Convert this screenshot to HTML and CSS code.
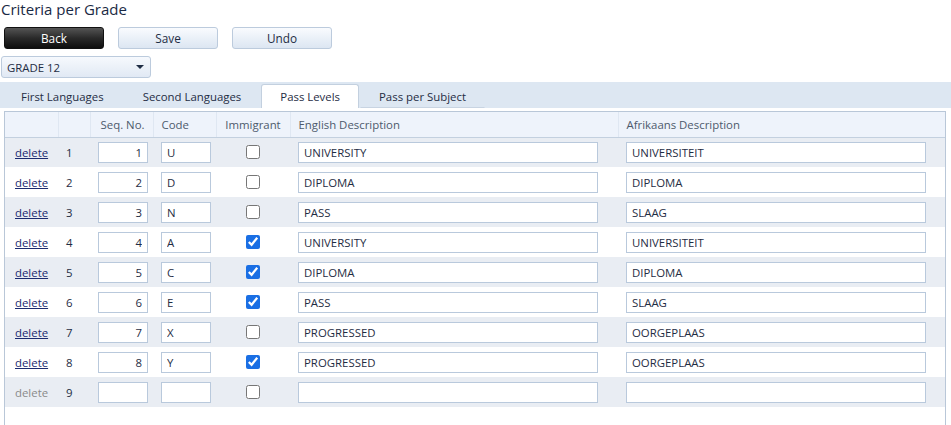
FILE: index.html
```html
<!DOCTYPE html>
<html lang="en">
  <head>
    <meta charset="UTF-8" />
    <meta name="viewport" content="width=device-width, initial-scale=1.0" />
    <title>Criteria per Grade</title>
    <link rel="stylesheet" href="styles.css">
  </head>

  <body>
    <div class="page">
      <h1>Criteria per Grade</h1>

      <div class="toolbar">
        <a href="#" class="btn btn-dark">Back</a>
        <a href="#" class="btn">Save</a>
        <a href="#" class="btn">Undo</a>
      </div>

      <div class="select">
        <span>GRADE 12</span>
        <span class="caret"></span>
      </div>

      <!-- tabs -->
      <div class="tabs">
        <div class="tab">First Languages</div>
        <div class="tab">Second Languages</div>
        <div class="tab active">Pass Levels</div>
        <div class="tab">Pass per Subject</div>
      </div>

      <div class="grid">
        <table>
          <colgroup>
            <col class="c-del" />
            <col class="c-num" />
            <col class="c-seq" />
            <col class="c-code" />
            <col class="c-imm" />
            <col class="c-eng" />
            <col class="c-afr" />
          </colgroup>
          <thead>
            <tr>
              <th></th>
              <th></th>
              <th class="right">Seq. No.</th>
              <th>Code</th>
              <th class="center">Immigrant</th>
              <th>English Description</th>
              <th>Afrikaans Description</th>
            </tr>
          </thead>
          <tbody>
            <tr>
              <td><a href="#" class="del">delete</a></td>
              <td>1</td>
              <td><input class="seq" type="text" value="1" /></td>
              <td><input class="code" type="text" value="U" /></td>
              <td class="center"><input type="checkbox" /></td>
              <td><input class="desc" type="text" value="UNIVERSITY" /></td>
              <td><input class="desc" type="text" value="UNIVERSITEIT" /></td>
            </tr>
            <tr>
              <td><a href="#" class="del">delete</a></td>
              <td>2</td>
              <td><input class="seq" type="text" value="2" /></td>
              <td><input class="code" type="text" value="D" /></td>
              <td class="center"><input type="checkbox" /></td>
              <td><input class="desc" type="text" value="DIPLOMA" /></td>
              <td><input class="desc" type="text" value="DIPLOMA" /></td>
            </tr>
            <tr>
              <td><a href="#" class="del">delete</a></td>
              <td>3</td>
              <td><input class="seq" type="text" value="3" /></td>
              <td><input class="code" type="text" value="N" /></td>
              <td class="center"><input type="checkbox" /></td>
              <td><input class="desc" type="text" value="PASS" /></td>
              <td><input class="desc" type="text" value="SLAAG" /></td>
            </tr>
            <tr>
              <td><a href="#" class="del">delete</a></td>
              <td>4</td>
              <td><input class="seq" type="text" value="4" /></td>
              <td><input class="code" type="text" value="A" /></td>
              <td class="center"><input type="checkbox" checked /></td>
              <td><input class="desc" type="text" value="UNIVERSITY" /></td>
              <td><input class="desc" type="text" value="UNIVERSITEIT" /></td>
            </tr>
            <tr>
              <td><a href="#" class="del">delete</a></td>
              <td>5</td>
              <td><input class="seq" type="text" value="5" /></td>
              <td><input class="code" type="text" value="C" /></td>
              <td class="center"><input type="checkbox" checked /></td>
              <td><input class="desc" type="text" value="DIPLOMA" /></td>
              <td><input class="desc" type="text" value="DIPLOMA" /></td>
            </tr>
            <tr>
              <td><a href="#" class="del">delete</a></td>
              <td>6</td>
              <td><input class="seq" type="text" value="6" /></td>
              <td><input class="code" type="text" value="E" /></td>
              <td class="center"><input type="checkbox" checked /></td>
              <td><input class="desc" type="text" value="PASS" /></td>
              <td><input class="desc" type="text" value="SLAAG" /></td>
            </tr>
            <tr>
              <td><a href="#" class="del">delete</a></td>
              <td>7</td>
              <td><input class="seq" type="text" value="7" /></td>
              <td><input class="code" type="text" value="X" /></td>
              <td class="center"><input type="checkbox" /></td>
              <td><input class="desc" type="text" value="PROGRESSED" /></td>
              <td><input class="desc" type="text" value="OORGEPLAAS" /></td>
            </tr>
            <tr>
              <td><a href="#" class="del">delete</a></td>
              <td>8</td>
              <td><input class="seq" type="text" value="8" /></td>
              <td><input class="code" type="text" value="Y" /></td>
              <td class="center"><input type="checkbox" checked /></td>
              <td><input class="desc" type="text" value="PROGRESSED" /></td>
              <td><input class="desc" type="text" value="OORGEPLAAS" /></td>
            </tr>
            <!-- new (empty) row -->
            <tr>
              <td><span class="del disabled">delete</span></td>
              <td>9</td>
              <td><input class="seq" type="text" value="" /></td>
              <td><input class="code" type="text" value="" /></td>
              <td class="center"><input type="checkbox" /></td>
              <td><input class="desc" type="text" value="" /></td>
              <td><input class="desc" type="text" value="" /></td>
            </tr>
          </tbody>
        </table>
      </div>
    </div>
  </body>
</html>
```

FILE: styles.css
```css
* {
  font-family: "Open Sans", "Noto Sans", sans-serif;
  margin: 0;
  padding: 0;
  box-sizing: border-box;
}

body {
  background-color: #ffffff;
  color: #1f2d44;
  font-size: 11.4px;
}

.page {
  display: flex;
  flex-direction: column;
}

h1 {
  font-size: 15px;
  font-weight: normal;
  line-height: 18px;
  color: #1a2a44;
  padding-left: 1px;
}

/* buttons */
.toolbar {
  display: flex;
  gap: 14px;
  padding: 9px 0 0 4px;
}

.btn {
  display: block;
  width: 100px;
  height: 22px;
  line-height: 20px;
  text-align: center;
  font-size: 11.8px;
  color: #1f2d44;
  text-decoration: none;
  border: 1px solid #bccbdd;
  border-radius: 3px;
  background: linear-gradient(#f9fbfe, #dce6f2);
}

.btn-dark {
  color: #ffffff;
  border-color: #111111;
  background: linear-gradient(#545454, #2a2a2a 50%, #0e0e0e);
}

/* grade dropdown */
.select {
  display: flex;
  align-items: center;
  justify-content: space-between;
  width: 150px;
  height: 22px;
  margin: 7px 0 0 1px;
  padding: 0 6px 0 5px;
  border: 1px solid #bccbdd;
  border-radius: 3px;
  background: linear-gradient(#f6f9fd, #e1e9f4);
}

.caret {
  width: 0;
  height: 0;
  border-left: 4px solid transparent;
  border-right: 4px solid transparent;
  border-top: 4px solid #1f2d44;
}

/* tab strip */
.tabs {
  display: flex;
  gap: 1px;
  height: 26px;
  margin-top: 4px;
  padding: 2px 0 0 2px;
  background-color: #dde7f2;
}

.tab {
  height: 24px;
  line-height: 23px;
  padding: 0 18px;
  white-space: nowrap;
  color: #1f2d44;
  border: 1px solid transparent;
  border-bottom: none;
}

.tab.active {
  background-color: #ffffff;
  border-color: #c3d0df;
  border-radius: 3px 3px 0 0;
}

.tab:last-child {
  border-bottom: 1px solid #c8d4e2;
}

/* grid */
.grid {
  margin: 3px 5px 0 4px;
  height: 320px;
  border: 1px solid #b9c7d8;
  border-bottom: none;
}

table {
  width: 100%;
  border-collapse: collapse;
  table-layout: fixed;
}

col.c-del { width: 53px; }
col.c-num { width: 32px; }
col.c-seq { width: 63px; }
col.c-code { width: 63px; }
col.c-imm { width: 74px; }
col.c-eng { width: 328px; }

th {
  height: 25px;
  font-weight: normal;
  text-align: left;
  white-space: nowrap;
  color: #4d5a6c;
  padding: 0 8px;
  background-color: #eef3fb;
  border-left: 1px solid #dfe7f2;
  border-bottom: 1px solid #c3d0df;
}

th:first-child {
  border-left: none;
}

th.right {
  text-align: right;
}

td {
  height: 30px;
  padding: 0 8px;
  color: #1f2d44;
  white-space: nowrap;
}

tbody tr:nth-child(odd) td {
  background-color: #e9edf3;
}

.center {
  text-align: center;
}

td.center {
  padding: 0;
}

.del {
  color: #1b2a70;
  padding-left: 2px;
}

.del.disabled {
  color: #8a8a8a;
}

input[type="text"] {
  display: block;
  height: 21px;
  padding: 0 5px;
  font-size: 11.4px;
  color: #1f2d44;
  border: 1px solid #b9c9dc;
  background-color: #ffffff;
  outline: none;
}

input.seq {
  width: 50px;
  text-align: right;
}

input.code {
  width: 50px;
}

input.desc {
  width: 300px;
}

input[type="checkbox"] {
  display: block;
  width: 14px;
  height: 14px;
  margin: 0 auto;
  accent-color: #1a6fe4;
}
```
